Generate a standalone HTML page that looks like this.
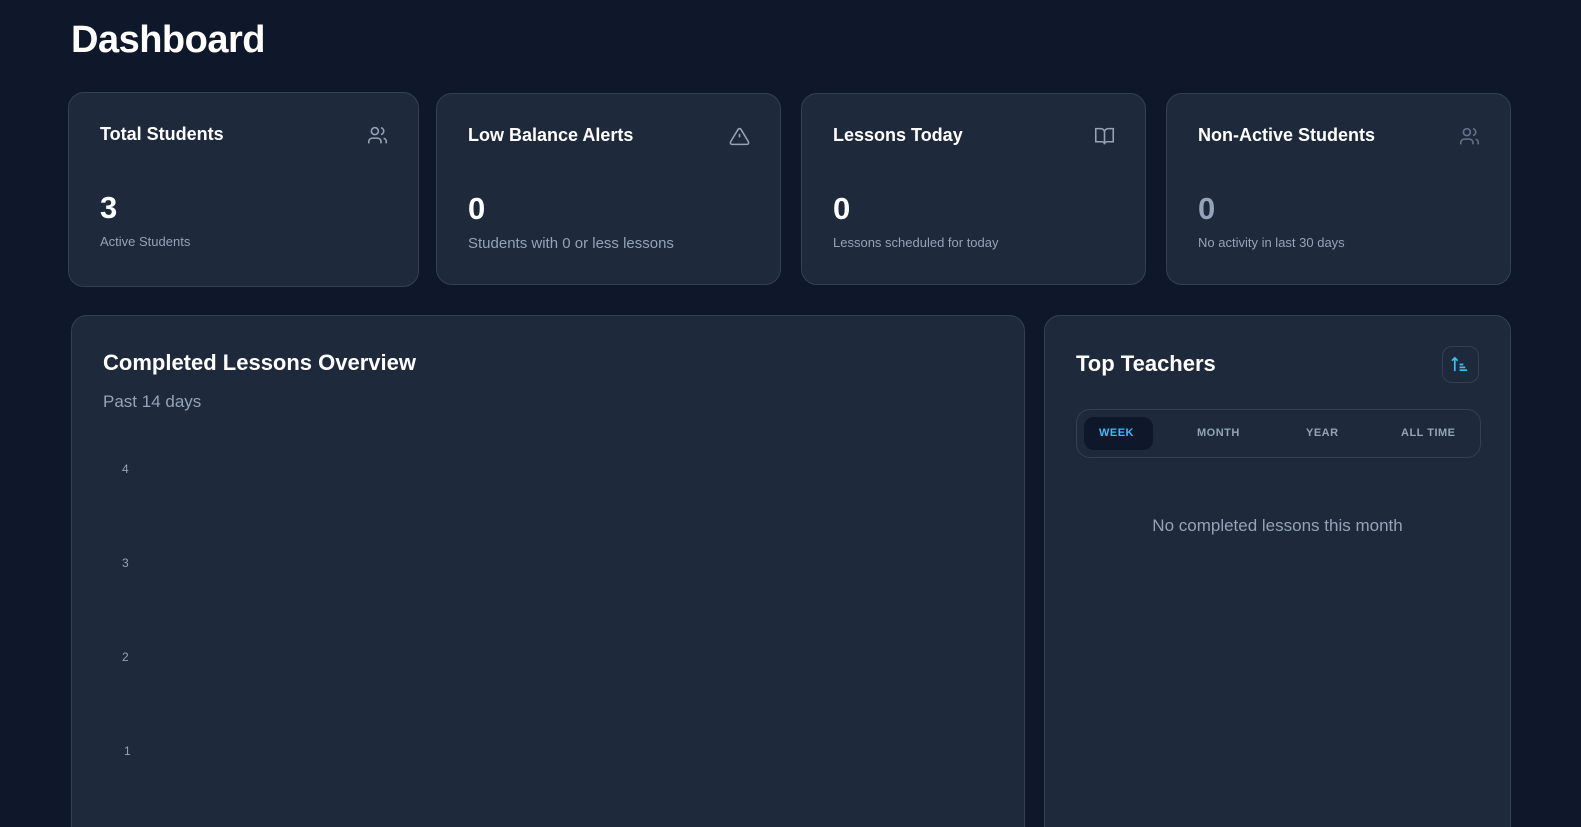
<!DOCTYPE html><html style="overflow:hidden;height:827px"><head><style>
body{margin:0;background:#0f172a;font-family:"Liberation Sans",sans-serif;width:1581px;height:827px;overflow:hidden;position:relative;color:#fff}
.c{position:absolute;background:#1e293b;border:1px solid #334155;border-radius:16px;box-sizing:border-box}
.t{position:absolute;left:31px;top:31px;font-size:18px;font-weight:bold}
.n{position:absolute;left:31px;top:97px;font-size:31px;font-weight:bold}
.s{position:absolute;left:31px;top:141px;font-size:13px;color:#94a3b8}
.i{position:absolute;right:30px;top:32px}
.y{position:absolute;left:50px;font-size:12px;color:#94a3b8}
.tab{position:absolute;top:17px;font-size:11px;font-weight:bold;color:#94a3b8;letter-spacing:.5px}
</style></head><body>
<div style="position:absolute;left:71px;top:19px;font-size:38px;font-weight:bold;letter-spacing:-.5px">Dashboard</div>
<div class="c" style="left:68px;top:92px;width:351px;height:195px"><div class="t">Total Students</div>
<svg class="i" style="top:32px" width="21" height="21" viewBox="0 0 24 24" fill="none" stroke="#94a3b8" stroke-width="1.8"><circle cx="9" cy="7" r="4"/><path d="M2 21v-2a4 4 0 0 1 4-4h6a4 4 0 0 1 4 4v2M16 3.1a4 4 0 0 1 0 7.8M22 21v-2a4 4 0 0 0-3-3.9"/></svg>
<div class="n">3</div><div class="s">Active Students</div></div>
<div class="c" style="left:436px;top:93px;width:345px;height:192px"><div class="t">Low Balance Alerts</div>
<svg class="i" width="21" height="21" viewBox="0 0 24 24" fill="none" stroke="#94a3b8" stroke-width="1.8"><path d="M10.3 3.9 1.8 18a2 2 0 0 0 1.7 3h17a2 2 0 0 0 1.7-3L13.7 3.9a2 2 0 0 0-3.4 0zM12 9v4M12 17h.01"/></svg>
<div class="n">0</div><div class="s" style="font-size:15px">Students with 0 or less lessons</div></div>
<div class="c" style="left:801px;top:93px;width:345px;height:192px"><div class="t">Lessons Today</div>
<svg class="i" width="21" height="21" viewBox="0 0 24 24" fill="none" stroke="#94a3b8" stroke-width="1.8"><path d="M2 3h6a4 4 0 0 1 4 4v14a3 3 0 0 0-3-3H2zM22 3h-6a4 4 0 0 0-4 4v14a3 3 0 0 1 3-3h7z"/></svg>
<div class="n">0</div><div class="s">Lessons scheduled for today</div></div>
<div class="c" style="left:1166px;top:93px;width:345px;height:192px"><div class="t">Non-Active Students</div>
<svg class="i" width="21" height="21" viewBox="0 0 24 24" fill="none" stroke="#64748b" stroke-width="1.8"><circle cx="9" cy="7" r="4"/><path d="M2 21v-2a4 4 0 0 1 4-4h6a4 4 0 0 1 4 4v2M16 3.1a4 4 0 0 1 0 7.8M22 21v-2a4 4 0 0 0-3-3.9"/></svg>
<div class="n" style="color:#94a3b8">0</div><div class="s">No activity in last 30 days</div></div>
<div class="c" style="left:71px;top:315px;width:954px;height:530px">
<div style="position:absolute;left:31px;top:34px;font-size:22px;font-weight:bold">Completed Lessons Overview</div>
<div style="position:absolute;left:31px;top:76px;font-size:17px;color:#94a3b8">Past 14 days</div>
<div class="y" style="top:146px">4</div><div class="y" style="top:240px">3</div><div class="y" style="top:334px">2</div><div class="y" style="top:428px;left:52px">1</div></div>
<div class="c" style="left:1044px;top:315px;width:467px;height:530px">
<div style="position:absolute;left:31px;top:35px;font-size:22px;font-weight:bold">Top Teachers</div>
<div style="position:absolute;left:397px;top:30px;width:37px;height:37px;border:1px solid #334155;border-radius:10px;box-sizing:border-box">
<svg style="position:absolute;left:8px;top:8px" width="19" height="19" viewBox="0 0 20 20" fill="none" stroke="#38bdf8" stroke-width="1.8"><path d="M4 17V3M1 6l3-3 3 3M9 10h4M9 13h6M9 16h8"/></svg></div>
<div style="position:absolute;left:31px;top:93px;width:405px;height:49px;border:1px solid #334155;border-radius:14px;box-sizing:border-box">
<div style="position:absolute;left:7px;top:7px;width:69px;height:33px;background:#0f172a;border-radius:10px"></div>
<div class="tab" style="left:22px;color:#38bdf8">WEEK</div><div class="tab" style="left:120px">MONTH</div><div class="tab" style="left:229px">YEAR</div><div class="tab" style="left:324px">ALL TIME</div></div>
<div style="position:absolute;left:0;width:100%;top:200px;text-align:center;font-size:17px;color:#94a3b8">No completed lessons this month</div></div>
</body></html>
